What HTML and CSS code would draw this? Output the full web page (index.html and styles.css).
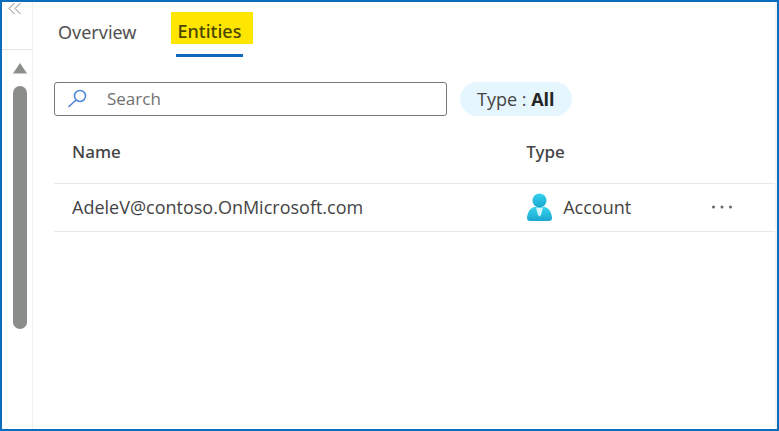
FILE: index.html
```html
<!DOCTYPE html>
<html lang="en">
<head>
<meta charset="utf-8">
<title>Entities</title>
<link rel="stylesheet" href="styles.css">
</head>
<body>
<div class="frame">
  <aside class="rail">
    <button class="collapse" type="button" aria-label="Collapse">
      <svg width="14" height="14" viewBox="0 0 14 14"><path d="M6.5 1 1 6.500l5.500 5.500M12.500 1 7 6.500l5.500 5.500"/></svg>
    </button>
    <div class="scroll">
      <svg class="arrow" width="14" height="11" viewBox="0 0 14 11"><path d="M7 0 14 10.500H0Z"/></svg>
      <div class="thumb"></div>
    </div>
  </aside>
  <main class="panel">
    <nav class="tabs">
      <a class="tab" href="#overview">Overview</a>
      <a class="tab active" href="#entities"><span class="mark">Entities</span></a>
    </nav>
    <div class="filters">
      <label class="search">
        <svg width="22" height="22" viewBox="0 0 22 22"><circle cx="13" cy="8" r="5.500"/><path d="M9 12 1.500 19"/></svg>
        <input type="text" placeholder="Search" aria-label="Search">
      </label>
      <button class="pill" type="button">Type : <b>All</b></button>
    </div>
    <table class="grid">
      <colgroup><col class="col-name"><col class="col-type"><col></colgroup>
      <thead><tr><th>Name</th><th>Type</th><th></th></tr></thead>
      <tbody>
        <tr>
          <td>AdeleV@contoso.OnMicrosoft.com</td>
          <td>
            <span class="kind">
              <svg width="28" height="30" viewBox="0 0 28 30">
                <defs><linearGradient id="person" x1="0" y1="0" x2="0" y2="1"><stop offset="0" stop-color="#35d3ee"/><stop offset="1" stop-color="#1ba6cf"/></linearGradient></defs>
                <path fill="url(#person)" d="M4 29Q1 29 1 26C1.500 20 4.500 15 9 15H18C22.500 15 25.500 20 26 26Q26 29 23 29Z"/>
                <path fill="#d5f5fb" d="M10 15.500H17L15 23 13.500 24.500 12 23Z"/>
                <circle cx="13.500" cy="8.500" r="7" fill="url(#person)"/>
              </svg>
              Account
            </span>
          </td>
          <td>
            <button class="more" type="button" aria-label="More actions">
              <svg width="22" height="4" viewBox="0 0 22 4"><circle cx="2.500" cy="2" r="1.500"/><circle cx="11" cy="2" r="1.500"/><circle cx="19.500" cy="2" r="1.500"/></svg>
            </button>
          </td>
        </tr>
      </tbody>
    </table>
  </main>
</div>
</body>
</html>
```
FILE: styles.css
```css
* { box-sizing: border-box; }
body {
  margin: 0;
  font-family: "Open Sans", "Noto Sans", sans-serif;
  font-size: 18px;
  line-height: 24px;
  color: #444;
}
button, input { font: inherit; color: inherit; }
button { border: 0; padding: 0; background: none; }
svg { display: block; flex: none; }
.frame {
  display: flex;
  min-height: 100vh;
  border: 2px solid #0a6ebd;
  background: #fff;
}
.rail {
  flex: none;
  width: 31px;
  border-right: 1px solid #f1f1f1;
}
.collapse {
  display: block;
  width: 100%;
  height: 48px;
  padding: 0 6px;
  border-bottom: 1px solid #e4e4e4;
}
.collapse svg {
  margin-bottom: 38px;
  fill: none;
  stroke: #858585;
}
.scroll {
  display: flex;
  flex-direction: column;
  align-items: center;
  gap: 12px;
  padding: 13px 0 0 6px;
}
.arrow { fill: #8b8d8b; }
.thumb {
  width: 14px;
  height: 243px;
  border-radius: 7px;
  background: #8b8d8b;
}
.panel {
  flex: 1;
  min-width: 0;
  padding: 10px 0 0 21px;
  border-right: 2px solid #eef6fa;
}
.tabs {
  display: flex;
  gap: 39px;
  padding-left: 4px;
  font-family: "Noto Sans", "Open Sans", sans-serif;
}
.tab {
  padding: 8px 0 10px;
  color: #505050;
  text-decoration: none;
}
.active {
  padding: 0 2px 10px;
  border-bottom: 3px solid #1068bf;
  color: #4a4600;
  font-weight: 500;
}
.mark {
  display: block;
  margin: 0 -12px 0 -7px;
  padding: 7px 12px 1px 7px;
  background: #ffe600;
}
.filters {
  display: flex;
  gap: 13px;
  padding-top: 25px;
}
.search {
  display: flex;
  align-items: center;
  gap: 18px;
  width: 393px;
  height: 34px;
  padding: 0 12px;
  border: 1px solid #777;
  border-radius: 3px;
}
.search svg {
  fill: none;
  stroke: #4a84d8;
  stroke-width: 1.500;
}
.search input {
  flex: 1;
  min-width: 0;
  padding: 0;
  border: 0;
  outline: 0;
  background: none;
  font-size: 17px;
}
.search input::placeholder { color: #707070; opacity: 1; }
.pill {
  height: 34px;
  padding: 0 17px;
  border-radius: 17px;
  background: #e6f6fe;
}
.pill b { color: #252525; }
.grid {
  width: 100%;
  table-layout: fixed;
  border-collapse: collapse;
}
.col-name { width: 63%; }
.col-type { width: 25%; }
th, td {
  padding: 0 0 0 18px;
  border-bottom: 1px solid #e9e9e9;
  text-align: left;
}
th {
  height: 67px;
  padding-top: 5px;
  font-family: "Noto Sans", "Open Sans", sans-serif;
  font-size: 17px;
  font-weight: 500;
}
td { height: 48px; }
td:last-child { padding-left: 23px; }
.kind {
  display: flex;
  align-items: center;
  gap: 9px;
}
.more { display: block; }
.more svg { fill: #666; }
```
